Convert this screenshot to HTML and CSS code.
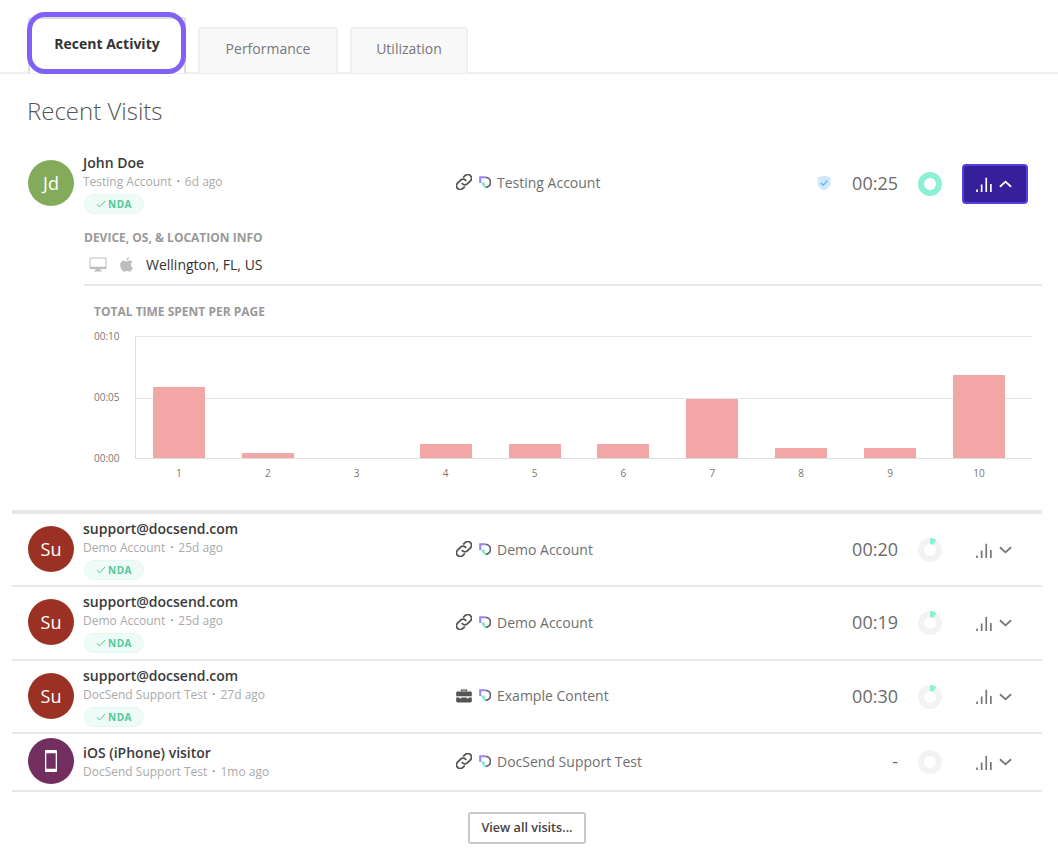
FILE: index.html
```html
<!DOCTYPE html>
<html>
	<head>
		<meta charset="utf-8">
		<title>Recent Activity</title>
		<link rel="stylesheet" href="styles.css">
	</head>
	<body>
		<svg class="defs" width="0" height="0">
			<defs>
				<symbol id="link" viewBox="1.5 1.5 13 13">
					<path d="M6.6 9.4a3 3 0 0 0 4.3 0l2.3-2.3a3 3 0 0 0-4.3-4.3L7.8 3.9" fill="none" stroke="currentColor" stroke-width="1.5" stroke-linecap="round"/>
					<path d="M9.4 6.6a3 3 0 0 0-4.3 0L2.8 8.9a3 3 0 0 0 4.3 4.3l1.1-1.1" fill="none" stroke="currentColor" stroke-width="1.5" stroke-linecap="round"/>
				</symbol>
				<symbol id="case" viewBox="0 0 16 14">
					<path d="M5.5 2.5V1.200h5v1.300" fill="none" stroke="currentColor" stroke-width="1.300"/>
					<path d="M1.400 2.500h13.200c.6 0 1.200.5 1.200 1.200v3.600H0.200V3.700c0-.7.6-1.200 1.200-1.200zM0.200 8.600h3.300v1h1.600v-1h5.800v1h1.600v-1h3.300v3.700c0 .7-.6 1.200-1.200 1.200H1.400c-.6 0-1.200-.5-1.200-1.200z" fill="currentColor"/>
				</symbol>
				<symbol id="docs" viewBox="0 0 12 13">
					<path d="M6.500 1.300a5 5 0 0 1 0 10" fill="none" stroke="#5f6470" stroke-width="1.800"/>
					<path d="M1.200 7V1.200H6.500" fill="none" stroke="#9a83f7" stroke-width="2"/>
					<path d="M1.800 6.500h3.700l1 5-1.500.3z" fill="#7fe9cd"/>
				</symbol>
				<symbol id="bars" viewBox="0 0 16 15">
					<path d="M0.200 12.500h1.700V15H0.200zM4.800 7.400h1.700V15H4.800zM9.400 0.800h1.700V15H9.400zM14 7h1.700v8H14z" fill="currentColor"/>
				</symbol>
			</defs>
		</svg>

		<div class="tabs">
			<div class="tab active">Recent Activity</div>
			<div class="tab">Performance</div>
			<div class="tab">Utilization</div>
		</div>

		<h1 class="title">Recent Visits</h1>

		<div class="visits">
			<div class="visit open">
				<div class="row">
					<div class="who">
						<div class="avatar green">Jd</div>
						<div class="info">
							<div class="name">John Doe</div>
							<div class="sub">Testing Account<i>·</i>6d ago</div>
							<div class="nda"><svg viewBox="0 0 10 8"><path d="M1 4.200 3.600 7 9 1" fill="none" stroke="#52c99a" stroke-width="1"/></svg>NDA</div>
						</div>
					</div>
					<div class="doc">
						<svg class="kind"><use href="#link"/></svg>
						<svg class="logo"><use href="#docs"/></svg>
						Testing Account
					</div>
					<svg class="shield" viewBox="0 0 14 16">
						<path d="M7 0.500 13.500 2.500V8c0 3.500-3 6-6.500 7.500C3.500 14 0.500 11.500 0.500 8V2.500z" fill="#cfe8fb"/>
						<path d="M3.800 7.800 6.200 10.200 10.400 5.600" fill="none" stroke="#6db9f2" stroke-width="1.500"/>
					</svg>
					<div class="time">00:25</div>
					<svg class="ring" viewBox="0 0 24 24"><circle cx="12" cy="12" r="9" fill="none" stroke="#8cf0d6" stroke-width="6"/></svg>
					<div class="toggle on">
						<svg class="bars"><use href="#bars"/></svg>
						<svg class="chev" viewBox="0 0 14 8"><path d="M1 7 7 1.500 13 7" fill="none" stroke="currentColor" stroke-width="2"/></svg>
					</div>
				</div>

				<div class="detail">
					<div class="label">DEVICE, OS, &amp; LOCATION INFO</div>
					<div class="device">
						<svg class="monitor" viewBox="0 0 18 15">
							<path d="M1.500 0.500h15c.6 0 1 .4 1 1V11c0 .6-.4 1-1 1h-15c-.6 0-1-.4-1-1V1.500c0-.6.4-1 1-1zM1.500 1.500V9.800h15V1.500zM6.500 12h5v1.600h1.500v1H5v-1h1.500z" fill="#bdbdbd" fill-rule="evenodd"/>
						</svg>
						<svg class="apple" viewBox="0 0 14 16">
							<path d="M9.800 0.200C9.900 1.800 8.500 3.400 6.900 3.300 6.800 1.800 8.300 0.300 9.800 0.200zM10.200 3.800c1.300 0 2.500.7 3.200 1.800-2.500 1.500-2.100 5 .5 6.100-.8 2-2.200 4-3.500 4-.9 0-1.500-.6-2.800-.6s-1.900.6-2.800.6C2.900 15.900 0.200 11.800 0.200 8.200c0-2.800 1.900-4.300 3.700-4.300 1.200 0 2.200.8 3 .8s1.900-.9 3.300-.9z" fill="#bdbdbd"/>
						</svg>
						<span>Wellington, FL, US</span>
					</div>
					<div class="chart">
						<div class="label">TOTAL TIME SPENT PER PAGE</div>
						<div class="graph">
							<div class="yaxis"><span>00:10</span><span>00:05</span><span>00:00</span></div>
							<div class="plot">
								<div class="slot"><div class="bar" style="height: 71px"></div></div>
								<div class="slot"><div class="bar" style="height: 5px"></div></div>
								<div class="slot"><div class="bar" style="height: 0"></div></div>
								<div class="slot"><div class="bar" style="height: 14px"></div></div>
								<div class="slot"><div class="bar" style="height: 14px"></div></div>
								<div class="slot"><div class="bar" style="height: 14px"></div></div>
								<div class="slot"><div class="bar" style="height: 59px"></div></div>
								<div class="slot"><div class="bar" style="height: 10px"></div></div>
								<div class="slot"><div class="bar" style="height: 10px"></div></div>
								<div class="slot"><div class="bar" style="height: 83px"></div></div>
							</div>
						</div>
						<div class="xaxis">
							<span>1</span><span>2</span><span>3</span><span>4</span><span>5</span><span>6</span><span>7</span><span>8</span><span>9</span><span>10</span>
						</div>
					</div>
				</div>
			</div>

			<div class="visit">
				<div class="row">
					<div class="who">
						<div class="avatar red">Su</div>
						<div class="info">
							<div class="name">support@docsend.com</div>
							<div class="sub">Demo Account<i>·</i>25d ago</div>
							<div class="nda"><svg viewBox="0 0 10 8"><path d="M1 4.200 3.600 7 9 1" fill="none" stroke="#52c99a" stroke-width="1"/></svg>NDA</div>
						</div>
					</div>
					<div class="doc">
						<svg class="kind"><use href="#link"/></svg>
						<svg class="logo"><use href="#docs"/></svg>
						Demo Account
					</div>
					<div class="time">00:20</div>
					<svg class="ring" viewBox="0 0 24 24"><circle cx="12" cy="12" r="9" fill="none" stroke="#f3f3f3" stroke-width="6"/><circle cx="12" cy="12" r="9" fill="none" stroke="#8cf0d6" stroke-width="6" pathLength="100" stroke-dasharray="9 91" transform="rotate(-90 12 12)"/></svg>
					<div class="toggle">
						<svg class="bars"><use href="#bars"/></svg>
						<svg class="chev" viewBox="0 0 14 8"><path d="M1 1 7 6.500 13 1" fill="none" stroke="currentColor" stroke-width="2"/></svg>
					</div>
				</div>
			</div>

			<div class="visit">
				<div class="row">
					<div class="who">
						<div class="avatar red">Su</div>
						<div class="info">
							<div class="name">support@docsend.com</div>
							<div class="sub">Demo Account<i>·</i>25d ago</div>
							<div class="nda"><svg viewBox="0 0 10 8"><path d="M1 4.200 3.600 7 9 1" fill="none" stroke="#52c99a" stroke-width="1"/></svg>NDA</div>
						</div>
					</div>
					<div class="doc">
						<svg class="kind"><use href="#link"/></svg>
						<svg class="logo"><use href="#docs"/></svg>
						Demo Account
					</div>
					<div class="time">00:19</div>
					<svg class="ring" viewBox="0 0 24 24"><circle cx="12" cy="12" r="9" fill="none" stroke="#f3f3f3" stroke-width="6"/><circle cx="12" cy="12" r="9" fill="none" stroke="#8cf0d6" stroke-width="6" pathLength="100" stroke-dasharray="9 91" transform="rotate(-90 12 12)"/></svg>
					<div class="toggle">
						<svg class="bars"><use href="#bars"/></svg>
						<svg class="chev" viewBox="0 0 14 8"><path d="M1 1 7 6.500 13 1" fill="none" stroke="currentColor" stroke-width="2"/></svg>
					</div>
				</div>
			</div>

			<div class="visit">
				<div class="row">
					<div class="who">
						<div class="avatar red">Su</div>
						<div class="info">
							<div class="name">support@docsend.com</div>
							<div class="sub">DocSend Support Test<i>·</i>27d ago</div>
							<div class="nda"><svg viewBox="0 0 10 8"><path d="M1 4.200 3.600 7 9 1" fill="none" stroke="#52c99a" stroke-width="1"/></svg>NDA</div>
						</div>
					</div>
					<div class="doc">
						<svg class="kind"><use href="#case"/></svg>
						<svg class="logo"><use href="#docs"/></svg>
						Example Content
					</div>
					<div class="time">00:30</div>
					<svg class="ring" viewBox="0 0 24 24"><circle cx="12" cy="12" r="9" fill="none" stroke="#f3f3f3" stroke-width="6"/><circle cx="12" cy="12" r="9" fill="none" stroke="#8cf0d6" stroke-width="6" pathLength="100" stroke-dasharray="9 91" transform="rotate(-90 12 12)"/></svg>
					<div class="toggle">
						<svg class="bars"><use href="#bars"/></svg>
						<svg class="chev" viewBox="0 0 14 8"><path d="M1 1 7 6.500 13 1" fill="none" stroke="currentColor" stroke-width="2"/></svg>
					</div>
				</div>
			</div>

			<div class="visit short">
				<div class="row">
					<div class="who">
						<div class="avatar purple">
							<svg viewBox="0 0 14 24" width="14" height="24">
								<path d="M2 1h10c.6 0 1 .4 1 1v20c0 .6-.4 1-1 1H2c-.6 0-1-.4-1-1V2c0-.6.4-1 1-1zM2.300 4.200v15.600h9.400V4.200z" fill="#fff" fill-rule="evenodd"/>
							</svg>
						</div>
						<div class="info">
							<div class="name">iOS (iPhone) visitor</div>
							<div class="sub">DocSend Support Test<i>·</i>1mo ago</div>
						</div>
					</div>
					<div class="doc">
						<svg class="kind"><use href="#link"/></svg>
						<svg class="logo"><use href="#docs"/></svg>
						DocSend Support Test
					</div>
					<div class="time">-</div>
					<svg class="ring" viewBox="0 0 24 24"><circle cx="12" cy="12" r="9" fill="none" stroke="#f3f3f3" stroke-width="6"/></svg>
					<div class="toggle">
						<svg class="bars"><use href="#bars"/></svg>
						<svg class="chev" viewBox="0 0 14 8"><path d="M1 1 7 6.500 13 1" fill="none" stroke="currentColor" stroke-width="2"/></svg>
					</div>
				</div>
			</div>
		</div>

		<div class="more">
			<div class="more-btn">View all visits...</div>
		</div>
	</body>
</html>
```

FILE: styles.css
```css
* {
	margin: 0;
	padding: 0;
	box-sizing: border-box;
}

body {
	font-family: "Open Sans", "Liberation Sans", sans-serif;
	color: #333;
	background: #fff;
	width: 1058px;
	height: 852px;
	overflow: hidden;
}

.defs {
	position: absolute;
}

/* tabs */
.tabs {
	display: flex;
	align-items: flex-end;
	gap: 12px;
	height: 74px;
	padding-left: 28px;
	border-bottom: 2px solid #eeeeee;
}

.tab {
	width: 140px;
	height: 46px;
	margin-bottom: -1px;
	border: 2px solid #efefef;
	border-bottom: 0;
	border-radius: 3px 3px 0 0;
	background: #f9f9f9;
	font-size: 14px;
	line-height: 40px;
	text-align: center;
	color: #777;
}

.tab:last-child {
	width: 118px;
}

.tab.active {
	position: relative;
	width: 158px;
	height: 56px;
	background: #fff;
	border-color: #dddddd;
	font-weight: 700;
	line-height: 50px;
	color: #333;
}

.tab.active::after {
	content: "";
	position: absolute;
	left: -3px;
	right: -2px;
	top: -7px;
	bottom: -1px;
	border: 5px solid #8060f5;
	border-radius: 18px;
}

.title {
	font-size: 24px;
	font-weight: 300;
	line-height: 32px;
	color: #555;
	margin: 21px 0 0 27px;
}

/* visit list */
.visits {
	width: 1030px;
	margin: 20px 0 0 12px;
}

.visit {
	height: 73.300px;
	border-bottom: 2px solid #e8e8e8;
}

.visit.open {
	height: 367px;
	border-bottom-width: 4px;
}

.visit.short {
	height: 58px;
}

.row {
	display: flex;
	align-items: center;
	height: 71.300px;
	padding: 0 14px 1px 16px;
}

.visit.open .row {
	height: 72px;
	padding-bottom: 0;
}

.visit.short .row {
	height: 56px;
}

.who {
	display: flex;
	align-items: center;
	gap: 9px;
	width: 427px;
}

.avatar {
	display: flex;
	align-items: center;
	justify-content: center;
	width: 46px;
	height: 46px;
	border-radius: 50%;
	font-size: 18px;
	color: #fff;
}

.avatar.green {
	background: #83ab59;
}

.avatar.red {
	background: #9b3024;
}

.avatar.purple {
	background: #722e5f;
}

.info {
	padding-top: 2px;
}

.name {
	font-size: 14px;
	font-weight: 600;
	line-height: 18px;
	color: #3a3a3a;
}

.sub {
	margin-top: 1px;
	font-size: 12px;
	line-height: 18px;
	color: #aaa;
}

.sub i {
	font-style: normal;
	color: #555;
	margin: 0 5px;
}

.nda {
	display: flex;
	align-items: center;
	justify-content: center;
	gap: 2px;
	width: 60px;
	height: 20px;
	margin: 3px 0 0 1px;
	border: 1px solid #e2f9f1;
	border-radius: 10px;
	background: #effbf7;
	font-size: 10px;
	font-weight: 700;
	letter-spacing: 0.5px;
	color: #52c99a;
}

.nda svg {
	width: 10px;
	height: 8px;
}

.doc {
	flex: 1;
	display: flex;
	align-items: center;
	font-size: 14px;
	color: #6f6f6f;
}

.visit.open .doc {
	padding-bottom: 2px;
}

.kind {
	width: 16px;
	height: 16px;
	margin: 0 7px 0 1px;
	color: #555;
}

.logo {
	width: 12px;
	height: 13px;
	margin-right: 6px;
}

.shield {
	width: 14px;
	height: 16px;
	margin-right: 21px;
}

.time {
	font-size: 18px;
	text-align: right;
	color: #6b6b6b;
}

.ring {
	width: 24px;
	height: 24px;
	margin: 2px 0 0 20px;
}

.toggle {
	display: flex;
	align-items: center;
	justify-content: center;
	gap: 7px;
	width: 66px;
	height: 40px;
	margin: 2px 0 0 20px;
	padding-right: 2px;
	border: 2px solid transparent;
	border-radius: 4px;
	color: #777;
}

.toggle.on {
	background: #351f9b;
	border-color: #5a3fe0;
	color: #fff;
}

.bars {
	width: 16px;
	height: 15px;
}

.chev {
	width: 13px;
	height: 8px;
}

/* expanded part */
.detail {
	padding: 11px 0 0 72px;
}

.label {
	font-size: 12px;
	font-weight: 700;
	line-height: 16px;
	color: #999;
}

.device {
	display: flex;
	align-items: center;
	height: 40px;
	padding: 0 0 2px 5px;
	border-bottom: 2px solid #e8e8e8;
	font-size: 14px;
	color: #333;
}

.monitor {
	width: 18px;
	height: 15px;
	margin-right: 13px;
}

.apple {
	width: 13px;
	height: 15px;
	margin-right: 13px;
}

.chart {
	padding: 18px 10px 0;
}

.graph {
	display: flex;
	margin-top: 16px;
}

.yaxis {
	display: flex;
	flex-direction: column;
	justify-content: space-between;
	width: 41px;
	height: 134px;
	margin-top: -6px;
	margin-bottom: -6px;
	font-size: 10px;
	line-height: 12px;
	color: #777;
}

.plot {
	flex: 1;
	display: flex;
	height: 123px;
	border-top: 1px solid #e6e6e6;
	border-left: 1px solid #dddddd;
	border-bottom: 1px solid #dddddd;
	background: linear-gradient(#e6e6e6, #e6e6e6) 0 61px / 100% 1px no-repeat;
}

.slot {
	width: 88.900px;
	display: flex;
	align-items: flex-end;
	justify-content: center;
}

.slot:first-child {
	margin-left: -1.500px;
}

.bar {
	width: 52px;
	background: #f2a6a6;
	border-radius: 1px 1px 0 0;
}

.xaxis {
	display: flex;
	margin: 7px 0 0 40.500px;
	font-size: 10px;
	line-height: 14px;
	color: #777;
}

.xaxis span {
	width: 88.900px;
	text-align: center;
}

/* footer button */
.more {
	display: flex;
	justify-content: center;
	margin: 20px 0 0 -4px;
}

.more-btn {
	width: 118px;
	height: 32px;
	border: 2px solid #c8c8cc;
	border-radius: 3px;
	font-size: 12.600px;
	font-weight: 600;
	line-height: 28px;
	text-align: center;
	color: #444;
}
```
